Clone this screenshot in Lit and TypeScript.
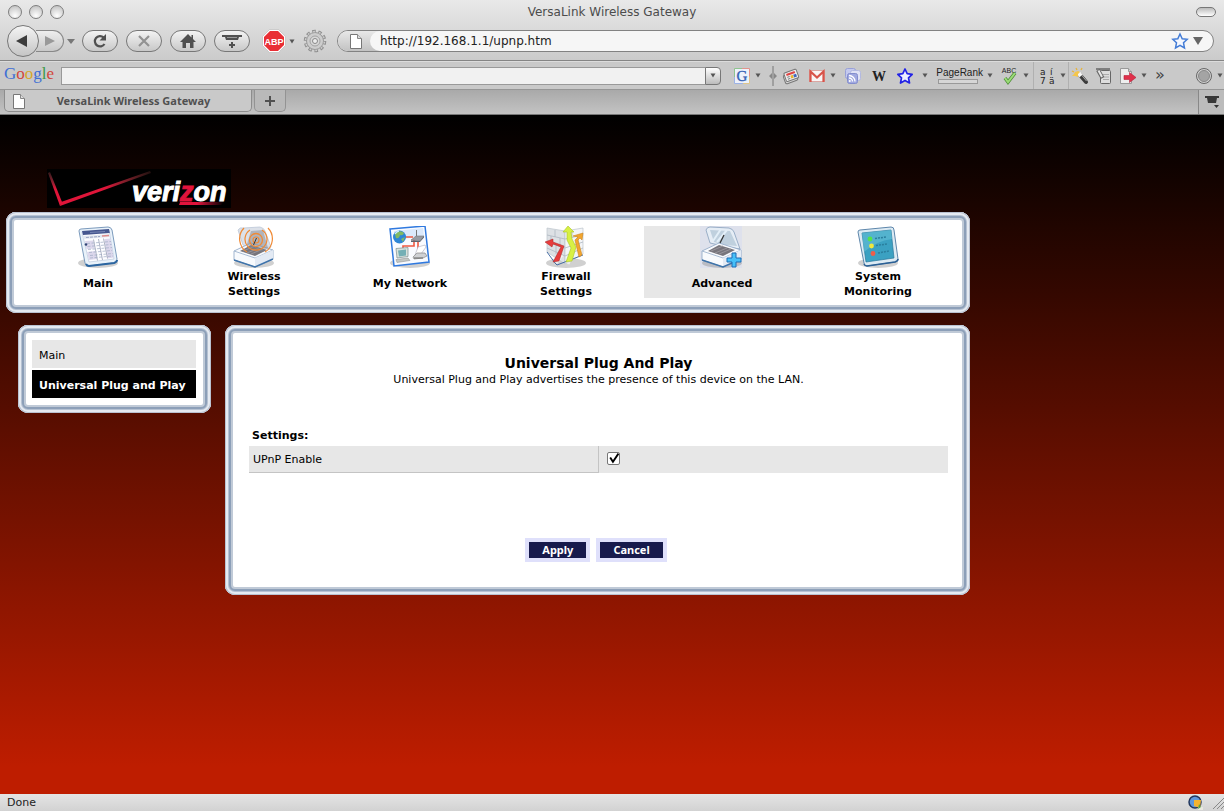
import { LitElement, html, css, svg, nothing } from "lit";
import { customElement, property, state } from "lit/decorators.js";

const caret = html`<svg class="caret" width="6" height="5" viewBox="0 0 6 5" aria-hidden="true"><path d="M.5 .5h5L3 4.500z" fill="#555"/></svg>`;

const pic = (w: number, h: number, body: unknown) =>
  html`<svg width=${w} height=${h} viewBox="0 0 ${w} ${h}" aria-hidden="true">${body}</svg>`;

const docShape = svg`<path d="M1.500 1.500h7l4 4v10h-11z" fill="#fff" stroke="#777"/><path d="M8.500 1.500v4h4" fill="#ddd" stroke="#888"/>`;

const toolPics: Record<string, unknown> = {
  google: pic(18, 18, svg`<rect x="1.500" y="1.500" width="15" height="15" fill="#eef2fb"/><path d="M1.500 16V1.500h8" fill="none" stroke="#8fc48f"/><path d="M9 1.500h7.500v9" fill="none" stroke="#e2938c"/><path d="M1.500 10v6.500h9" fill="none" stroke="#9cb2e6"/><path d="M10 16.500h6.500v-7" fill="none" stroke="#dfc68a"/><text x="9" y="14" text-anchor="middle" font-family="Liberation Serif, serif" font-size="15" fill="#3763b5" stroke="#3763b5" stroke-width=".4">G</text>`),
  news: pic(18, 18, svg`<g transform="rotate(-20 9 9)"><rect x="1.500" y="6" width="13" height="9" rx="1.500" fill="#d6d6d6" stroke="#777"/><rect x="3" y="4" width="13" height="9" rx="1" fill="#eee" stroke="#777"/><path d="M5 6.500h9" stroke="#e04545" stroke-width="2"/><path d="M5 9h2.500M5 11h2.500" stroke="#777"/><path d="M8.500 10h2.500" stroke="#e7b32c" stroke-width="3"/><path d="M11.500 10h3" stroke="#4267bb" stroke-width="3"/></g>`),
  mail: pic(18, 18, svg`<path d="M1.500 3.500h15v11h-15z" fill="#f9f5f5" stroke="#dba6a2"/><path d="M2.500 15V4.500L9 10.500l6.500-6V15" fill="none" stroke="#d8544a" stroke-width="2.200"/>`),
  feeds: pic(18, 18, svg`<rect x="1.500" y="1.500" width="10" height="10" rx="2" fill="#c4c9ee" stroke="#98a0d8"/><rect x="6.500" y="3.500" width="10" height="10" rx="2" fill="#e0e2f5" stroke="#b3b9e0"/><rect x="3.500" y="6.500" width="10" height="10" rx="2" fill="#a0a8e0" stroke="#838dcc"/><path d="M5 8.500a6 6 0 0 1 6 6M5 11a3.500 3.500 0 0 1 3.500 3.500" fill="none" stroke="#fff" stroke-width="1.300"/><circle cx="5.800" cy="14" r="1" fill="#fff"/>`),
  wiki: pic(18, 18, svg`<text x="9" y="14" text-anchor="middle" font-family="Liberation Serif, serif" font-size="14" font-weight="bold" fill="#222">W</text>`),
  star: pic(18, 18, svg`<path d="M9 2l2.200 4.700 5 .6-3.700 3.500 1 5.200L9 13.400 4.500 16l1-5.200L1.800 7.300l5-.6z" fill="#eceeff" stroke="#2222e6" stroke-width="1.700" stroke-linejoin="round"/>`),
  spell: pic(18, 18, svg`<text x="8" y="6" text-anchor="middle" font-family="Liberation Sans, sans-serif" font-size="7" fill="#222">ABC</text><path d="M4 11l3 4 7-9" fill="none" stroke="#4f8e38" stroke-width="3.500"/><path d="M4 11l3 4 7-9" fill="none" stroke="#9bdc78" stroke-width="2"/>`),
  translate: pic(18, 18, svg`<g font-family="DejaVu Sans, sans-serif" font-size="9" fill="#222"><text x="2" y="8">a</text><text x="12" y="8">í</text><text x="2" y="17">7</text><text x="11" y="17">ä</text></g>`),
  wand: pic(18, 18, svg`<path d="M9 8l6 7" stroke="#3c3c3c" stroke-width="4" stroke-linecap="round"/><path d="M7.500 6l2.500 3" stroke="#f7f7f7" stroke-width="4"/><path d="M10.500 8l5 6" stroke="#aaa"/><path d="M4 5l3-1 2 1-2 2v3L4 9 1 9l2-2z" fill="#f5c64b"/><path d="M5 1l1 2M11 1l-1 2M1 4l2 1" stroke="#e7b33a" stroke-width="1.300"/>`),
  notes: pic(18, 18, svg`<rect x="5.500" y="3.500" width="10" height="13" rx="1" fill="#ddd" stroke="#666"/><path d="M8 7.500h6M8 10h6M8 12.500h6" stroke="#aaa"/><path d="M1 2h14" stroke="#666" stroke-width="1.500"/><path d="M3 3l4.500 8" stroke="#666" stroke-width="4"/><path d="M3.500 3.500l3.500 6.500" stroke="#e6e6e6" stroke-width="2"/>`),
  exportPage: pic(18, 18, svg`<path d="M1.500 1.500h8l3 3v12h-11z" fill="#eee" stroke="#999"/><path d="M9.500 1.500v3h3" fill="#ccc" stroke="#999"/><path d="M5 8.500h5.500v-3l6.500 5-6.500 5v-3H5z" fill="#e0304a" stroke="#b3203a" stroke-width=".6"/>`),
};

@customElement("gateway-icon")
class GatewayIcon extends LitElement {
  @property() name = "";
  static styles = css`:host { display: block; height: 43px; } svg { display: block; }`;
  private art() {
    const shadow = svg`<ellipse cx="22" cy="37" rx="20" ry="5" fill="#777" opacity=".35"/>`;
    const scanner = svg`
      <path d="M2 25L19 17l22 7v9L23 41 2 34z" fill="#f8fafd" stroke="#8ca5c4" stroke-width=".8"/>
      <path d="M2 25l21 7 18-8" fill="none" stroke="#a9bcd4"/>
      <path d="M23 32v9l18-8v-9z" fill="#e3eaf4"/>
      <path d="M8 25l11-6 16 5-12 6z" fill="#77757c"/>
      <path d="M11 25l12-5M15 27l12-5M19 28l12-5" stroke="#97949b"/>
      <path d="M2 34l21 7 18-8" fill="none" stroke="#3e73aa" stroke-width="1.500"/>`;
    switch (this.name) {
      case "main":
        return svg`${shadow}<path d="M3 5q0-2 2-2L32 1q3 0 4 3l5 29q0 3-3 4l-26 3q-2 0-3-3z" fill="#e9f2fa" stroke="#7b9abc"/>
          <path d="M10 38q1 2 3 2l25-3q3-1 3-3" fill="none" stroke="#2b65a0" stroke-width="2"/>
          <path d="M6 6l27-2 5 29-25 3z" fill="#fdfdff" stroke="#b4c2d8" stroke-width=".6"/>
          <path d="M6 5l27-2 .8 4L7 9z" fill="#46578f"/><path d="M14 6.500l15-1" stroke="#8190bc" stroke-width=".8"/>
          <path d="M7 10l27-2 .5 3-27 2z" fill="#e3e8f1"/><path d="M10 11.500l14-1" stroke="#9ba6c4" stroke-dasharray="3 1"/><path d="M26 10l7-.5" stroke="#dd8b8b" stroke-width="1.500"/>
          <path d="M9 15l8-.6 1.500 8-8 .8zM11 26l8-1 2 8-8 1zM28.500 13l6-.6 3 19-6 1z" fill="#dcd7ec"/>
          <path d="M17.500 13.500l4 21M22.500 13l4 21M27.500 12.500l4 20" stroke="#8c93aa" stroke-width=".7"/>
          <path d="M11 17.500l24-2M11.500 20.500l24-2M12 23.500l24-2M13 26.500l23-2M14 29.500l23-2M14 32l23-2" stroke="#9eabc3" stroke-width=".7" stroke-dasharray="3 1.500"/>
          <circle cx="10" cy="18.500" r="1.300" fill="#304375"/>`;
      case "wireless":
        return svg`${shadow}<path d="M6 4q2-3 5-2l17-1q4 1 5 4l6 16-17 2-11-4z" fill="#dce1e9" stroke="#bcc8d8" stroke-width=".8"/>
          ${scanner}<path d="M15 18L19 5l12-1 5 18-6 4-12-4z" fill="#83878f" opacity=".5"/>
          <g fill="none" stroke="#f08a35"><circle cx="24" cy="14" r="3" stroke-width="1.200"/><circle cx="24" cy="14" r="6.500" stroke-width="1.300"/><path d="M18 4a11 11 0 1 0 12 0" stroke-width="1.200"/><path d="M12 2a15.500 15.500 0 0 0 3 24M36 2a15.500 15.500 0 0 1-3 24" stroke-width="1.200"/></g><path d="M24.500 12l-3 7" stroke="#333"/>`;
      case "network":
        return svg`${shadow}<path d="M2 3l35-3 4 36-35 4z" fill="#f9fbff" stroke="#2f79df" stroke-width="1.500"/><path d="M6 5l29-3 1 8-29 4z" fill="#dbe9fb"/>
          <path d="M15 11h10M26 12v8H15v4M30 16v9" fill="none" stroke="#ee5941" stroke-width="1.600"/>
          <circle cx="11.500" cy="11" r="6.500" fill="#2e86d6"/><path d="M7 8q5-5 9-1-1 3-4 2-1 4-4 3zM13 13l4-2-2 5z" fill="#82b962"/><path d="M7 8q2-3 4-3" stroke="#d3efff" fill="none" stroke-width="1.300"/>
          <path d="M23 14l5-4h8l-4 5z" fill="#979ca4" stroke="#777" stroke-width=".6"/><path d="M23 14.500v1.500h9l4-4.500v-1.500l-4 5z" fill="#5e646d"/><path d="M28.500 10V4" stroke="#777"/>
          <path d="M8 22.500l12-1v9l-11 1.500z" fill="#d9e2dd" stroke="#899" stroke-width=".8"/><path d="M10 24.500l8-1v6l-7 1z" fill="#74afb5"/><path d="M8 33.500l12-1.500 2 2.500-13 2z" fill="#c3c7c4" stroke="#888" stroke-width=".5"/>
          <path d="M30 21l7-2 1 2-5 7-6 1z" fill="#fff" stroke="#aab" stroke-width=".6"/><path d="M25 31l4-4h8l2 3-4 2-9 1z" fill="#cfd1d4" stroke="#777" stroke-width=".6"/><path d="M26 32h9" stroke="#666"/>`;
      case "firewall":
        return svg`${shadow}<path d="M3 2l18 3v33L3 26z" fill="#dde1e5" stroke="#bcc4cb" stroke-width=".7"/><path d="M21 5l18-3v26L21 38z" fill="#f3f5f7" stroke="#bcc4cb" stroke-width=".7"/>
          <path d="M3 9l18 4 18-4M3 16l18 6 18-6M3 22l18 8 18-8M11 4v7M16 12v8M7 10v8M12 20v8M28 4v7M34 10v8M28 20v7M35 17v7" stroke="#aeb8c1" stroke-width=".8" fill="none"/>
          <path d="M3 26l8 11 2 2 26-10" fill="none" stroke="#345f9c" stroke-width=".9"/>
          <path d="M12 37l6-8M24 38l5-11" stroke="#fff" stroke-width="3" opacity=".6"/>
          <path d="M22 36l5-14-4-8V6h-4l5-6 6 6h-3l1 7 4 8-4 14z" fill="#d8f044" stroke="#a8c427" stroke-width=".6"/>
          <path d="M9 36l8-15-8-3-1 3-7-5 8-3v3l11 4-5 15z" fill="#e83c3c" stroke="#a72424" stroke-width=".5"/>
          <path d="M35 31l-4-17 3-3-5-1 10-3-1 7-2-2-2 2 4 15z" fill="#f3a52d" stroke="#ca8420" stroke-width=".6"/>`;
      case "advanced":
        return svg`<rect width="42" height="42" fill="#dee1ec"/>${shadow}
          <path d="M6 4q1-3 4-3l19 1q4 1 5 4l6 17-12-2L10 17z" fill="#e6edf5" stroke="#879fbd" stroke-width=".8"/><path d="M10 4l20 1 7 15-11-1-12-3z" fill="#bfd0de"/><path d="M13 15l8-12M17 16l10-12" stroke="#e3eff8" stroke-width="2"/>
          ${scanner}<path d="M24 9l-4 8" stroke="#333" stroke-width="1.200"/>
          <path d="M32 27h4v5h5v4h-5v5h-4v-5h-5v-4h5z" fill="#46c0f8" stroke="#1c6db5"/>`;
      default:
        return svg`${shadow}<path d="M2 6q0-2 2-2l31-3q3 0 3 3l4 29q0 3-3 3l-28 4q-3 0-3-3z" fill="#dceaf3" stroke="#5d86ab"/>
          <path d="M8 38q1 2 3 2l28-4q3-1 3-3" fill="none" stroke="#2b6095" stroke-width="1.600"/>
          <path d="M6 7l29-3 3 28-28 4z" fill="#3ba1c2" stroke="#26779b" stroke-width=".7"/><path d="M6 7l29-3 1 9q-16 2-28 13z" fill="#63bdd4" opacity=".65"/>
          <circle cx="14" cy="13" r="2.400" fill="#54e34c"/><circle cx="15.500" cy="20" r="2.400" fill="#f0e83d"/><circle cx="17" cy="27.500" r="2.400" fill="#ee5e4a"/>
          <path d="M19 12.500l11-1.500M20 19.500l11-1.500M22 27l11-2" stroke="#2a7f9e" stroke-width="1.500" stroke-dasharray="2 1"/>`;
    }
  }
  render() {
    return html`<svg width="44" height="44" viewBox="0 0 44 44" aria-hidden="true">${this.art()}</svg>`;
  }
}

@customElement("browser-chrome")
class BrowserChrome extends LitElement {
  static styles = css`
    :host { display: block; font: 12px/16px "DejaVu Sans", sans-serif; color: #444; background: #c9c9c9; }
    button { font: inherit; color: inherit; border: 0; padding: 0; background: none; display: flex; align-items: center; justify-content: center; flex: none; }
    svg { display: block; flex: none; }
    .top { background: linear-gradient(#e9e9e9, #cbcbcb); border-bottom: 1px solid #858585; }
    .titlebar { display: grid; grid-template-columns: 64px 1fr 64px; align-items: center; height: 24px; padding: 0 8px; }
    .lights { display: flex; gap: 7px; }
    .light { width: 14px; height: 14px; border-radius: 50%; border: 1px solid #7e7e7e; background: radial-gradient(circle at 50% 80%, #fff, #bbb); }
    .title { text-align: center; color: #4c4c4c; }
    .lozenge { justify-self: end; width: 20px; height: 10px; border: 1px solid #777; border-radius: 5px; background: linear-gradient(#bbb, #fff); }
    .toolbar { display: flex; align-items: center; gap: 8px; height: 34px; padding: 0 10px 2px 7px; }
    .history { display: flex; align-items: center; width: 67px; }
    .back { width: 32px; height: 32px; border: 1px solid #777; border-radius: 50%; background: linear-gradient(#f4f4f4, #c5c5c5); z-index: 1; }
    .forward { width: 28px; height: 22px; margin-left: -3px; border: 1px solid #888; border-left: 0; border-radius: 0 11px 11px 0; background: linear-gradient(#eee, #c8c8c8); }
    .recent { width: 14px; height: 20px; }
    .pill { width: 36px; height: 22px; border: 1px solid #777; border-radius: 11px; background: linear-gradient(#f3f3f3, #c8c8c8); }
    .abp { gap: 3px; margin-left: 4px; }
    .address { flex: 1; display: flex; align-items: center; height: 22px; border: 1px solid #828282; border-radius: 11px; box-sizing: border-box; overflow: hidden; background: #f6f6f6; margin-left: 2px; padding-right: 10px; gap: 4px; }
    .site { display: flex; align-items: center; justify-content: center; width: 44px; height: 20px; padding-right: 8px; box-sizing: border-box; background: linear-gradient(#e8e8e8, #c2c2c2); margin-right: -16px; }
    .url { flex: 1; min-width: 0; height: 20px; border: 0; border-radius: 10px 0 0 10px; padding: 0 0 0 10px; font: inherit; color: #222; background: #f6f6f6; }
    .bookbar { display: flex; align-items: center; height: 29px; padding: 0 1px 0 4px; background: #c9c9c9; border-top: 1px solid #dcdcdc; border-bottom: 1px solid #969696; box-sizing: border-box; }
    .google { font: 17px/20px "Liberation Serif", serif; width: 57px; padding-bottom: 4px; box-sizing: border-box; }
    .blue { color: #3f6fd4; } .red { color: #d2453c; } .gold { color: #d8a72a; } .green { color: #3b9a48; }
    .query { flex: 1; min-width: 40px; height: 18px; box-sizing: border-box; border: 1px solid #999; border-right: 0; background: #f1f1f1; margin: 0; padding: 0 4px; }
    .drop { width: 16px; height: 18px; border: 1px solid #777; border-radius: 0 4px 4px 0; background: linear-gradient(#fff, #bbb); }
    .tools { display: flex; align-items: center; gap: 8px; margin-left: 12px; height: 27px; }
    .tools.tight { gap: 6px; margin-left: 2px; }
    .menu { gap: 4px; }
    .menu.loose { gap: 8px; }
    .rank { gap: 4px; font: 10px/10px "Liberation Sans", sans-serif; color: #222; }
    .bar { display: block; box-sizing: border-box; width: 40px; height: 5px; margin: 1px 0 0 2px; border: 1px solid #999; background: #d6d6d6; }
    .split { width: 5px; height: 20px; display: block; }
    .framed { height: 27px; padding: 0 2px 0 4px; border: solid #b0b0b0; border-width: 0 1px; margin-left: -4px; }
    .more { width: 14px; font-size: 16px; padding-bottom: 2px; }
    .orb { margin-left: 22px; }
    .tabs { display: flex; align-items: stretch; height: 25px; background: linear-gradient(#a9a9a9, #c3c3c3); border-bottom: 1px solid #777; box-sizing: border-box; padding-left: 4px; }
    .tab { width: 248px; margin-bottom: 2px; border: 1px solid #8d8d8d; border-top: 0; border-radius: 0 0 5px 5px; background: #c9c9c9; justify-content: flex-start; box-sizing: border-box; padding-left: 7px; }
    .tab-name { flex: 1; text-align: center; padding: 1px 10px 0 0; font: bold 11px/16px "Noto Sans", sans-serif; color: #505050; }
    .plus { width: 32px; margin: 0 auto 2px 2px; border: 1px solid #939393; border-top: 0; border-radius: 0 0 5px 5px; background: #b9b9b9; }
    .all { width: 26px; border-left: 1px solid #888; background: #bcbcbc; }
  `;
  private tool(name: string, label: string, kind = "icon") {
    return html`<button class=${kind} aria-label=${label}>${toolPics[name]}${kind === "icon" ? nothing : caret}</button>`;
  }
  render() {
    return html`
      <header class="top">
        <div class="titlebar">
          <div class="lights">
            <button class="light" aria-label="Close"></button><button class="light" aria-label="Minimize"></button><button class="light" aria-label="Zoom"></button>
          </div>
          <div class="title">VersaLink Wireless Gateway</div>
          <button class="lozenge" aria-label="Toggle toolbar"></button>
        </div>
        <nav class="toolbar" aria-label="Navigation">
          <div class="history">
            <button class="back" aria-label="Back">${pic(14, 12, svg`<path d="M0 6L11 0v12z" fill="#3d3d3d"/>`)}</button>
            <button class="forward" aria-label="Forward">${pic(10, 10, svg`<path d="M0 0l10 5-10 5z" fill="#999"/>`)}</button>
            <button class="recent" aria-label="History">${pic(8, 5, svg`<path d="M0 0h8L4 5z" fill="#777"/>`)}</button>
          </div>
          <button class="pill" aria-label="Reload">${pic(16, 16, svg`<path d="M11.500 4.300A5.200 5.200 0 1 0 12.500 11" fill="none" stroke="#505050" stroke-width="2.200"/><path d="M14 1v6.500H7.500z" fill="#505050"/>`)}</button>
          <button class="pill" aria-label="Stop">${pic(14, 14, svg`<path d="M2 2l10 10M12 2L2 12" stroke="#929292" stroke-width="2.200"/>`)}</button>
          <button class="pill" aria-label="Home">${pic(16, 14, svg`<path d="M8 0l3.500 3.400V1H13v4l3 3h-2.500v6H10V9H6v5H2.500V8H0z" fill="#505050"/>`)}</button>
          <button class="pill" aria-label="New tab">${pic(22, 16, svg`<path d="M1 2h20v2h-3l-1 3H5L4 4H1z" fill="#505050"/><path d="M6 4.500h10" stroke="#999"/><path d="M8 12h6M11 9v6" stroke="#505050" stroke-width="2"/>`)}</button>
          <button class="abp" aria-label="Adblock Plus">${pic(24, 24, svg`<path d="M7.500 .5h9l7 7v9l-7 7h-9l-7-7v-9z" fill="#fff" stroke="#aaa" stroke-width=".5"/><path d="M8 2h8l6 6v8l-6 6H8l-6-6V8z" fill="#e92f35"/><text x="12" y="15.500" text-anchor="middle" font-family="Liberation Sans, sans-serif" font-weight="bold" font-size="9" fill="#fff">ABP</text>`)}${caret}</button>
          <button aria-label="Settings">${pic(24, 24, svg`<circle cx="12" cy="12" r="9.500" fill="none" stroke="#8e8e8e" stroke-width="3.500" stroke-dasharray="3.400 2.570"/><circle cx="12" cy="12" r="8.500" fill="#cdcdcd" stroke="#999"/><circle cx="12" cy="12" r="9.500" fill="none" stroke="#cdcdcd" stroke-width="1.500" stroke-dasharray="1.800 4.170" stroke-dashoffset="-.8"/><circle cx="12" cy="12" r="5" fill="#d8d8d8" stroke="#a2a2a2"/><circle cx="12" cy="12" r="2.500" fill="#ececec" stroke="#888"/>`)}</button>
          <div class="address">
            <span class="site">${pic(14, 16, docShape)}</span>
            <input class="url" aria-label="Address" value="http://192.168.1.1/upnp.htm">
            ${pic(18, 18, svg`<path d="M9 2l2.200 4.700 5 .6-3.700 3.500 1 5.200L9 13.400 4.500 16l1-5.200L1.800 7.300l5-.6z" fill="#f3f7ff" stroke="#437cd6" stroke-width="1.500"/>`)}
            ${pic(10, 8, svg`<path d="M0 0h10L5 8z" fill="#666"/>`)}
          </div>
        </nav>
      </header>
      <div class="bookbar">
        <div class="google"><span class="blue">G</span><span class="red">o</span><span class="gold">o</span><span class="blue">g</span><span class="green">l</span><span class="red">e</span></div>
        <input class="query" aria-label="Google search"><button class="drop" aria-label="Search history">${caret}</button>
        <div class="tools">
          ${this.tool("google", "Search", "menu")}
          <span class="split">${pic(8, 20, svg`<path d="M4 0v20" stroke="#777"/><path d="M3 7v6L0 10zM5 7v6l3-3z" fill="#888"/>`)}</span>
          ${this.tool("news", "News")}${this.tool("mail", "Mail", "menu")}${this.tool("feeds", "Feeds")}${this.tool("wiki", "Wikipedia")}${this.tool("star", "Bookmarks", "menu loose")}
          <button class="rank"><span>PageRank<span class="bar"></span></span>${caret}</button>
          ${this.tool("spell", "Spelling", "menu")}
          <button class="menu framed" aria-label="Translate">${toolPics.translate}${caret}</button>
        </div>
        <div class="tools tight">
          ${this.tool("wand", "Highlight")}${this.tool("notes", "Notes")}${this.tool("exportPage", "Send to", "menu")}
          <button class="more" aria-label="More">»</button>
          <button class="menu orb" aria-label="Account">${pic(18, 18, svg`<circle cx="9" cy="9" r="7.500" fill="#d0d0d0" stroke="#666"/><circle cx="9" cy="9" r="5.500" fill="#a4a4a4" stroke="#888"/>`)}${caret}</button>
        </div>
      </div>
      <div class="tabs">
        <button class="tab">${pic(14, 16, docShape)}<span class="tab-name">VersaLink Wireless Gateway</span></button>
        <button class="plus" aria-label="Open tab">${pic(10, 10, svg`<path d="M5 0v10M0 5h10" stroke="#505050" stroke-width="2"/>`)}</button>
        <button class="all" aria-label="List tabs">${pic(16, 14, svg`<path d="M1 1h14v2h-2l-1 5H4L3 3H1z" fill="#383838"/><path d="M10 10h5l-2.500 3z" fill="#333"/>`)}</button>
      </div>`;
  }
}

@customElement("app-root")
class AppRoot extends LitElement {
  @state() private upnp = true;
  private sections = [
    ["main", "Main"], ["wireless", "Wireless Settings"], ["network", "My Network"],
    ["firewall", "Firewall Settings"], ["advanced", "Advanced"], ["monitoring", "System Monitoring"],
  ];
  static styles = css`
    :host { display: flex; flex-direction: column; min-height: 100vh; font: 11px/15px "DejaVu Sans", Verdana, sans-serif; color: #000; }
    a { color: inherit; text-decoration: none; }
    .page { flex: 1; padding: 54px 6px 24px; background: linear-gradient(#000, #be1d00 96%); }
    .brand { display: block; width: 184px; margin-left: 41px; }
    .brand svg { display: block; }
    .shell { max-width: 964px; }
    .panel { box-sizing: border-box; border-radius: 10px; background: #fff; box-shadow: inset 0 0 0 1px #b9c1d0, inset 0 0 0 3px #e5eaf1, inset 0 0 0 4px #b5c1d2, inset 0 0 0 6px #8c9fb8, inset 0 0 0 8px #c0cad7; }
    .sections { display: grid; grid-template-columns: repeat(6, 1fr); padding: 14px 14px 15px; margin-top: 4px; }
    .section { display: flex; flex-direction: column; align-items: center; height: 72px; font-weight: bold; text-align: center; }
    .section.on { background: #e7e7e7; }
    .label { display: flex; align-items: center; max-width: 80px; flex: 1; }
    .label.wide { max-width: none; }
    .columns { display: flex; align-items: flex-start; gap: 14px; margin: 12px 0 0 12px; }
    .side { flex: 0 0 193px; display: grid; gap: 2px; padding: 15px 15px 15px 14px; }
    .side a { padding: 8px 7px 5px; background: #e7e7e7; }
    .side a.on { background: #000; color: #fff; font-weight: bold; white-space: nowrap; }
    .content { flex: 1; min-width: 0; padding: 30px 22px 33px 24px; }
    h1 { margin: 0; text-align: center; font-size: 14px; line-height: 17px; }
    .lead { margin: 0; text-align: center; }
    h2 { margin: 41px 0 3px 3px; font-size: 11px; line-height: 15px; }
    table { width: 100%; table-layout: fixed; border-collapse: separate; border-spacing: 0; background: #e7e7e7; }
    th, td { box-sizing: border-box; height: 27px; padding: 0 4px; text-align: left; font-weight: normal; }
    th { border: solid #c4c4c4; border-width: 0 1px 1px 0; }
    .check { appearance: none; display: block; width: 13px; height: 13px; margin: 0 0 2px 4px; border: 1px solid #777; border-radius: 2px; background: #fff; }
    .check:checked { background: #fff url("data:image/svg+xml,%3Csvg xmlns='http://www.w3.org/2000/svg' viewBox='0 0 10 10'%3E%3Cpath d='M2 4l2.500 4L9.500 .5' fill='none' stroke='%23000' stroke-width='1.700'/%3E%3C/svg%3E") center / 11px 11px no-repeat; }
    .actions { display: flex; justify-content: center; gap: 6px; margin-top: 65px; padding-right: 5px; }
    .action { height: 24px; padding: 0 13px; border: 4px solid #dfe0fb; background: #171a4c; color: #fff; font: bold 11px/16px "Noto Sans", sans-serif; }
    .status { display: flex; align-items: center; justify-content: space-between; height: 17px; padding: 0 0 0 7px; background: linear-gradient(#e4e4e4, #d2d2d2); color: #222; line-height: 17px; }
    .status-icons { display: flex; align-items: center; gap: 8px; }
  `;
  render() {
    return html`
      <browser-chrome></browser-chrome>
      <main class="page">
        <div class="shell">
          <a class="brand" href="#" aria-label="Verizon">
            <svg width="184" height="39" viewBox="0 0 184 39">
              <defs>
                <linearGradient id="long" x1="0" x2="1"><stop offset=".5" stop-color="#df1539"/><stop offset="1" stop-color="#a64b48" stop-opacity=".2"/></linearGradient>
                <linearGradient id="short" x1="0" y1="0" x2="0" y2="1"><stop stop-color="#a54b50" stop-opacity=".3"/><stop offset=".5" stop-color="#df1539"/></linearGradient>
                <linearGradient id="under"><stop offset=".4" stop-color="#e1143c"/><stop offset="1" stop-color="#e1143c" stop-opacity="0"/></linearGradient>
              </defs>
              <rect width="184" height="39" fill="#000"/>
              <path d="M1 4l2-1 12 30-2 4z" fill="url(#short)"/><path d="M13 37l1-4L103 2l1 2z" fill="url(#long)"/>
              <text x="85" y="32" font-family="Liberation Sans, sans-serif" font-size="27" font-weight="bold" font-style="italic" fill="#fff" stroke="#fff" stroke-width="1">veri<tspan fill="#e1143c" stroke="#e1143c">z</tspan>on</text>
              <path d="M133 33h44l-3 3h-42z" fill="url(#under)"/>
            </svg>
          </a>
          <nav class="panel sections" aria-label="Sections">
            ${this.sections.map(([id, name]) => html`
              <a href="#" class="section ${id === "advanced" ? "on" : ""}">
                <gateway-icon name=${id}></gateway-icon>
                <span class="label ${id === "network" ? "wide" : ""}">${name}</span>
              </a>`)}
          </nav>
          <div class="columns">
            <nav class="panel side" aria-label="Advanced">
              <a href="#">Main</a>
              <a href="#" class="on">Universal Plug and Play</a>
            </nav>
            <section class="panel content">
              <h1>Universal Plug And Play</h1>
              <p class="lead">Universal Plug and Play advertises the presence of this device on the LAN.</p>
              <h2>Settings:</h2>
              <table>
                <tr>
                  <th scope="row"><label for="upnp">UPnP Enable</label></th>
                  <td><input id="upnp" class="check" type="checkbox" .checked=${this.upnp} @change=${(e: Event) => (this.upnp = (e.target as HTMLInputElement).checked)}></td>
                </tr>
              </table>
              <div class="actions">
                <button class="action">Apply</button>
                <button class="action">Cancel</button>
              </div>
            </section>
          </div>
        </div>
      </main>
      <footer class="status">
        <span>Done</span>
        <span class="status-icons">
          <svg width="16" height="16" viewBox="0 0 16 16" aria-hidden="true"><circle cx="7" cy="7" r="6" fill="#5f97dc" stroke="#22365c" stroke-width="1.500"/><path d="M6 5h7l-1 8-6-2z" fill="#f5b430"/><path d="M10 12h5v3h-5z" fill="#e8e8df"/><path d="M11 9l2 3-3 2z" fill="#55a03d"/></svg>
          <svg width="12" height="14" viewBox="0 0 12 14" aria-hidden="true"><path d="M1 13L12 2M5 13l7-7M9 13l3-3" stroke="#888"/></svg>
        </span>
      </footer>`;
  }
}
